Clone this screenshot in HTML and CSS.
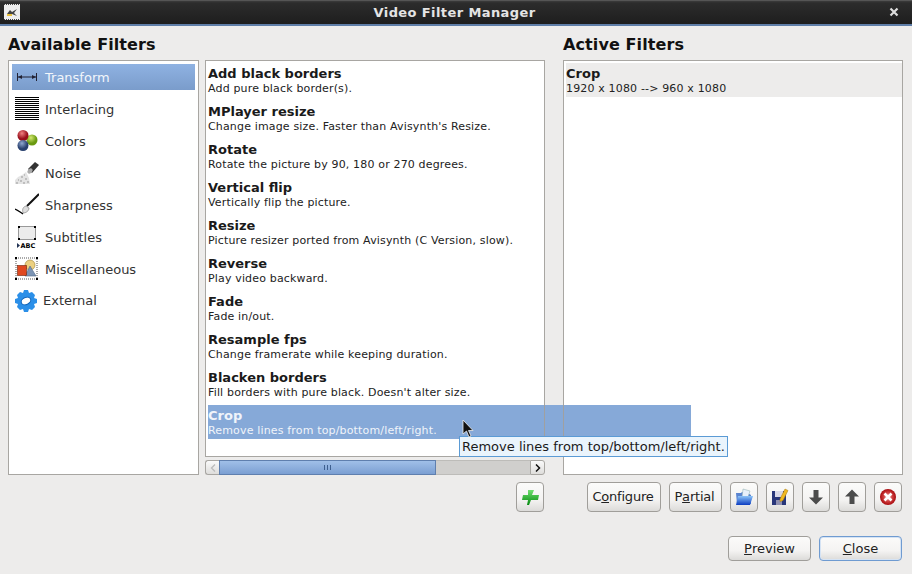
FILE: index.html
```html
<!DOCTYPE html>
<html lang="en">
<head>
<meta charset="utf-8">
<title>Video Filter Manager</title>
<link rel="stylesheet" href="styles.css">
</head>
<body>
<div class="window">
  <header class="titlebar">
    <svg class="title-icon" width="16" height="16" viewBox="0 0 16 16"><rect width="16" height="16" fill="#eee"/><path d="M0 .5h16M0 15.500h16" stroke="#444" stroke-dasharray="1 1"/><path d="M3 10l3-4 2 2 5-3-3 4 3 3-5-2-2 2z" fill="#444"/><rect x="3" y="10" width="5" height="2" fill="#e8c040"/></svg>
    <span class="title-text">Video Filter Manager</span>
    <svg class="title-close" width="10" height="10" viewBox="0 0 10 10"><path d="M1.500 1.500l7 7M8.500 1.500l-7 7" stroke="#ddd" stroke-width="2.200"/></svg>
  </header>
  <main class="content">
    <h2 class="heading">Available Filters</h2>
    <div class="heading-spacer"></div>
    <h2 class="heading">Active Filters</h2>

    <ul class="panel categories">
      <li class="cat cat-on">
        <svg class="cat-icon" viewBox="0 0 24 24"><path d="M2.500 8v8M21.500 8v8M3 12h18" stroke="#223" stroke-width="1" fill="none"/><path d="M3 12l4-2v4zM21 12l-4-2v4z" fill="#223"/></svg>
        <span>Transform</span>
      </li>
      <li class="cat">
        <svg class="cat-icon" viewBox="0 0 24 24"><path d="M0 .5h24M0 2.500h24M0 4.500h24M0 6.500h24M0 8.500h24M0 10.500h24M0 12.500h24M0 14.500h24M0 16.500h24M0 18.500h24M0 20.500h24M0 22.500h24" stroke="#000" stroke-width="1"/></svg>
        <span>Interlacing</span>
      </li>
      <li class="cat">
        <svg class="cat-icon" viewBox="0 0 24 24"><defs><radialGradient id="r" cx=".4" cy=".3"><stop offset="0" stop-color="#f08080"/><stop offset="1" stop-color="#98101c"/></radialGradient><radialGradient id="g" cx=".4" cy=".3"><stop offset="0" stop-color="#d4e870"/><stop offset="1" stop-color="#6a9a10"/></radialGradient><radialGradient id="b" cx=".4" cy=".3"><stop offset="0" stop-color="#90a8d0"/><stop offset="1" stop-color="#28406e"/></radialGradient></defs><circle cx="17" cy="11" r="5.500" fill="url(#g)"/><circle cx="8" cy="6.500" r="5.500" fill="url(#r)"/><circle cx="8" cy="16.500" r="5.500" fill="url(#b)"/></svg>
        <span>Colors</span>
      </li>
      <li class="cat">
        <svg class="cat-icon" viewBox="0 0 24 24"><path d="M13 8l7-7 4 3-7 8z" fill="#333"/><ellipse cx="15" cy="10" rx="2" ry="3" transform="rotate(45 15 10)" fill="#aaa"/><path d="M0 23h15l-1-6-3-6-4 3-4 2-3 3z" fill="#e4e4e4"/><path d="M1 22h2M5 20h2M8 22h2M10 18h2M6 16h2M3 19h1M12 21h2M9 14h1" stroke="#999" stroke-width="1"/></svg>
        <span>Noise</span>
      </li>
      <li class="cat">
        <svg class="cat-icon" viewBox="0 0 24 24"><path d="M24 1L12 13" stroke="#111" stroke-width="2"/><path d="M11 13c-3 1-4 3-3 7 3 0 6-2 6-5z" fill="#ddd" stroke="#888" stroke-width=".7"/><path d="M0 16c3 1 5 3 8 5" stroke="#000" stroke-width="1.200" fill="none"/></svg>
        <span>Sharpness</span>
      </li>
      <li class="cat">
        <svg class="cat-icon" viewBox="0 0 24 24"><rect x="3.500" y="1.500" width="17" height="13" fill="#ececec" stroke="#999"/><path d="M3 1h2v2H3zM19 1h2v2h-2zM3 13h2v2H3zM19 13h2v2h-2z" fill="#000"/><path d="M2 18l3 2.500-3 2.500z" fill="#235"/><text x="5.500" y="23" class="abc">ABC</text></svg>
        <span>Subtitles</span>
      </li>
      <li class="cat">
        <svg class="cat-icon" viewBox="0 0 24 24"><rect x="1" y="1" width="21" height="21" fill="none" stroke="#555" stroke-dasharray="1 1"/><path d="M0 0h2v2H0zM21 0h2v2h-2zM0 21h2v2H0zM21 21h2v2h-2z" fill="#000"/><circle cx="15" cy="8" r="5" fill="#ecd080" stroke="#a08030" stroke-width=".6"/><path d="M15 9l6 10H10z" fill="#7c94b4" stroke="#506888" stroke-width=".6"/><rect x="2.500" y="8.500" width="9" height="10" fill="#e04820" stroke="#702008" stroke-width=".6"/></svg>
        <span>Miscellaneous</span>
      </li>
      <li class="cat cat-ext">
        <svg class="cat-icon" viewBox="0 0 24 24"><path d="M10 1h4l1 3 3-1 3 3-1 3 3 1v4l-3 1 1 3-3 3-3-1-1 3h-4l-1-3-3 1-3-3 1-3-3-1v-4l3-1-1-3 3-3 3 1z" fill="#2b8fe8"/><ellipse cx="12" cy="12" rx="5" ry="3.500" transform="rotate(-25 12 12)" fill="#fff" stroke="#0f62b8"/></svg>
        <span>External</span>
      </li>
    </ul>

    <div class="middle">
      <ul class="panel filters">
        <li class="filter"><b>Add black borders</b><span>Add pure black border(s).</span></li>
        <li class="filter"><b>MPlayer resize</b><span>Change image size. Faster than Avisynth's Resize.</span></li>
        <li class="filter"><b>Rotate</b><span>Rotate the picture by 90, 180 or 270 degrees.</span></li>
        <li class="filter"><b>Vertical flip</b><span>Vertically flip the picture.</span></li>
        <li class="filter"><b>Resize</b><span>Picture resizer ported from Avisynth (C Version, slow).</span></li>
        <li class="filter"><b>Reverse</b><span>Play video backward.</span></li>
        <li class="filter"><b>Fade</b><span>Fade in/out.</span></li>
        <li class="filter"><b>Resample fps</b><span>Change framerate while keeping duration.</span></li>
        <li class="filter"><b>Blacken borders</b><span>Fill borders with pure black. Doesn't alter size.</span></li>
        <li class="filter filter-on"><b>Crop</b><span>Remove lines from top/bottom/left/right.</span><i class="seam seam-a"></i><i class="seam seam-b"></i></li>
      </ul>
      <div class="scrollbar">
        <div class="sb-btn sb-left"><svg width="6" height="8" viewBox="0 0 6 8"><path d="M5 .5L1.500 4 5 7.500" fill="none" stroke="#bbb" stroke-width="1.300"/></svg></div>
        <div class="sb-thumb"><span class="grip"></span><span class="grip"></span><span class="grip"></span></div>
        <div class="sb-trough"></div>
        <div class="sb-btn sb-right"><svg width="6" height="8" viewBox="0 0 6 8"><path d="M1 .5L4.500 4 1 7.500" fill="none" stroke="#111" stroke-width="1.500"/></svg></div>
      </div>
    </div>

    <ul class="panel active">
      <li class="active-row"><b>Crop</b><span>1920 x 1080 --&gt; 960 x 1080</span></li>
    </ul>

    <div class="spacer"></div>
    <div class="toolbar toolbar-add">
      <button class="btn icon-btn" type="button"><svg width="20" height="20" viewBox="0 0 20 20"><defs><linearGradient id="gp" x1="0" y1="0" x2="0" y2="1"><stop offset="0" stop-color="#70e070"/><stop offset="1" stop-color="#068a10"/></linearGradient></defs><path d="M8 3h6l-2 5h7l-1 5h-7l-2 5H7l1-5H2l1-5h5z" fill="url(#gp)"/></svg></button>
    </div>
    <div class="toolbar toolbar-active">
      <button class="btn text-btn btn-configure" type="button">C<u>o</u>nfigure</button>
      <button class="btn text-btn btn-partial" type="button">P<u>a</u>rtial</button>
      <button class="btn icon-btn" type="button"><svg width="18" height="18" viewBox="0 0 18 18"><defs><linearGradient id="fo" x1="0" y1="0" x2="0" y2="1"><stop offset="0" stop-color="#8cc4f8"/><stop offset="1" stop-color="#0c3cc0"/></linearGradient></defs><path d="M1 5h5l1-1h4l5 3v9H2z" fill="#5a84d0"/><path d="M8 1l7 2-2 6H7z" fill="#e8f0fa" stroke="#8aa" stroke-width=".5"/><path d="M3 8h15l-3 9H1z" fill="url(#fo)"/></svg></button>
      <button class="btn icon-btn" type="button"><svg width="18" height="18" viewBox="0 0 18 18"><rect x="1" y="3" width="14" height="14" fill="#28367a"/><rect x="4" y="3" width="8" height="6" fill="#d8d8e8"/><rect x="5" y="12" width="6" height="5" fill="#8f90b0"/><path d="M9 11l5-10 3 1.500-5 10-3 1z" fill="#f0b820" stroke="#a87808" stroke-width=".5"/></svg></button>
      <button class="btn icon-btn" type="button"><svg width="18" height="18" viewBox="0 0 18 18"><path d="M6.500 2h5v7.500H16l-7 7-7-7h4.500z" fill="#4c4c4c"/></svg></button>
      <button class="btn icon-btn" type="button"><svg width="18" height="18" viewBox="0 0 18 18"><path d="M6.500 16h5V8.500H16l-7-7-7 7h4.500z" fill="#4c4c4c"/></svg></button>
      <button class="btn icon-btn" type="button"><svg width="18" height="18" viewBox="0 0 18 18"><defs><radialGradient id="dl"><stop offset="0" stop-color="#eebbbb"/><stop offset=".55" stop-color="#d04040"/><stop offset="1" stop-color="#a80a0e"/></radialGradient></defs><circle cx="9" cy="9" r="8" fill="url(#dl)"/><path d="M5.500 5.500l7 7M12.500 5.500l-7 7" stroke="#fff" stroke-width="2.600"/></svg></button>
    </div>
  </main>
  <footer class="footer">
    <button class="btn foot-btn" type="button"><u>P</u>review</button>
    <button class="btn foot-btn foot-default" type="button"><u>C</u>lose</button>
  </footer>
  <div class="tooltip">Remove lines from top/bottom/left/right.</div>
  <svg class="cursor" width="13" height="20" viewBox="0 0 13 20"><path d="M1 1v14l3.500-3 2.500 6 2-1-2.500-5.500H11z" fill="#111" stroke="#eee" stroke-width=".8"/></svg>
</div>
</body>
</html>
```
FILE: styles.css
```css
* { box-sizing: border-box; }
html, body { margin: 0; padding: 0; }
body { font-family: "DejaVu Sans", sans-serif; color: #1a1a1a; background: #edeceb; }
ul { list-style: none; margin: 0; padding: 0; }
.window { position: relative; width: 912px; height: 574px; overflow: hidden; background: #edeceb; }

.titlebar {
  height: 26px; display: flex; align-items: center; padding: 0 13px 1px 4px;
  background: linear-gradient(#3c3c3c 0, #2c2c2c 2px, #1d1d1d 24px);
  border-bottom: 2px solid #5f7ea8; border-top: 1px solid #555;
}
.title-icon { flex: none; }
.title-text { flex: 1; text-align: center; color: #e4e4e4; font-weight: bold; font-size: 13px; letter-spacing: .4px; }
.title-close { flex: none; }

.content {
  display: grid; grid-template-columns: 191px 340px 352px; column-gap: 6px;
  grid-template-rows: 34px 415px 38px; padding-left: 8px;
}
.content > :nth-child(3n) { margin-left: 12px; }
.heading { margin: 0; align-self: center; font-size: 16px; font-weight: bold; color: #111; position: relative; top: 1px; letter-spacing: .1px; }

.panel { background: #fff; border: 1px solid #a8a6a2; }
.categories { padding: 3px; }
.cat { display: flex; align-items: center; gap: 6px; height: 26px; margin-bottom: 6px; padding-left: 3px; font-size: 13px; color: #333; }
.cat-on { background: linear-gradient(#8fb2e2, #7a9ccb); color: #f2f6fb; }
.cat-ext { height: 25px; gap: 5px; padding-left: 2px; }
.cat-icon { width: 24px; height: 24px; flex: none; }
.abc { font-family: "DejaVu Sans", sans-serif; font-size: 6.500px; font-weight: bold; fill: #000; }

.middle { display: flex; flex-direction: column; gap: 3px; }
.filters { height: 397px; padding: 2px; }
.filter { display: flex; flex-direction: column; height: 34px; margin-bottom: 4px; padding-top: 2px; white-space: nowrap; }
.filter b, .active-row b { font-size: 13px; line-height: 17px; color: #1a1a1a; }
.filter span, .active-row span { font-size: 11px; line-height: 13px; letter-spacing: .16px; color: #222; }
.filter-on { position: relative; z-index: 2; width: 483px; background: #86a9d8; }
.filter-on b, .filter-on span { color: #f0f4fa; }
.seam { position: absolute; top: 0; bottom: 0; width: 1px; background: #a0a0a0; }
.seam-a { left: 336px; }
.seam-b { left: 355px; }

.scrollbar { display: flex; height: 15px; }
.sb-btn { flex: none; width: 14px; display: flex; align-items: center; justify-content: center; background: linear-gradient(#fafafa, #dedddb); border: 1px solid #a8a6a2; }
.sb-left { border-radius: 3px 0 0 3px; border-right: 0; }
.sb-right { width: 15px; border-radius: 0 3px 3px 0; }
.sb-thumb { flex: none; width: 217px; display: flex; align-items: center; justify-content: center; gap: 2px; background: linear-gradient(#a0bfe8, #7b9fd2); border: 1px solid #5f7fae; }
.grip { width: 1px; height: 5px; background: #3e5f8f; }
.sb-trough { flex: 1; background: #d0cfcd; border-top: 1px solid #bdbcb9; border-bottom: 1px solid #bdbcb9; }

.active { padding: 2px 0 0 2px; }
.active-row { display: flex; flex-direction: column; height: 34px; padding-top: 2px; background: #edeceb; }

.toolbar { display: flex; padding-top: 7px; align-items: flex-start; }
.toolbar-add { justify-content: flex-end; padding-right: 1px; }
.toolbar-active { gap: 8px; padding-left: 24px; }

.btn {
  display: flex; align-items: center; justify-content: center; padding: 0; height: 30px;
  font-family: "DejaVu Sans", sans-serif; font-size: 13px; color: #222;
  background: linear-gradient(#fbfbfa 0, #f4f3f2 60%, #dcdbd9 100%);
  border: 1px solid #a09e9a; border-radius: 4px;
  white-space: pre;
}
.icon-btn { width: 28px; }
.text-btn { white-space: nowrap; padding: 0 2px 2px 0; }
.btn-configure { width: 74px; letter-spacing: -.2px; }
.btn-partial { width: 53px; letter-spacing: -.2px; }

.footer { display: flex; justify-content: flex-end; gap: 8px; padding: 23px 10px 0 0; }
.foot-btn { width: 83px; height: 25px; }
.foot-default { border-color: #6f9bd1; box-shadow: inset 0 0 0 1px #d5e3f4; }

.tooltip {
  position: absolute; left: 459px; top: 436px; z-index: 3; height: 21px; width: 269px;
  padding-left: 2px; font-size: 13px; line-height: 19px; color: #1a1a1a; white-space: nowrap;
  background: #eaf4fc; border: 1px solid #5b9bd5;
}
.cursor { position: absolute; left: 462px; top: 419px; z-index: 4; }
```
